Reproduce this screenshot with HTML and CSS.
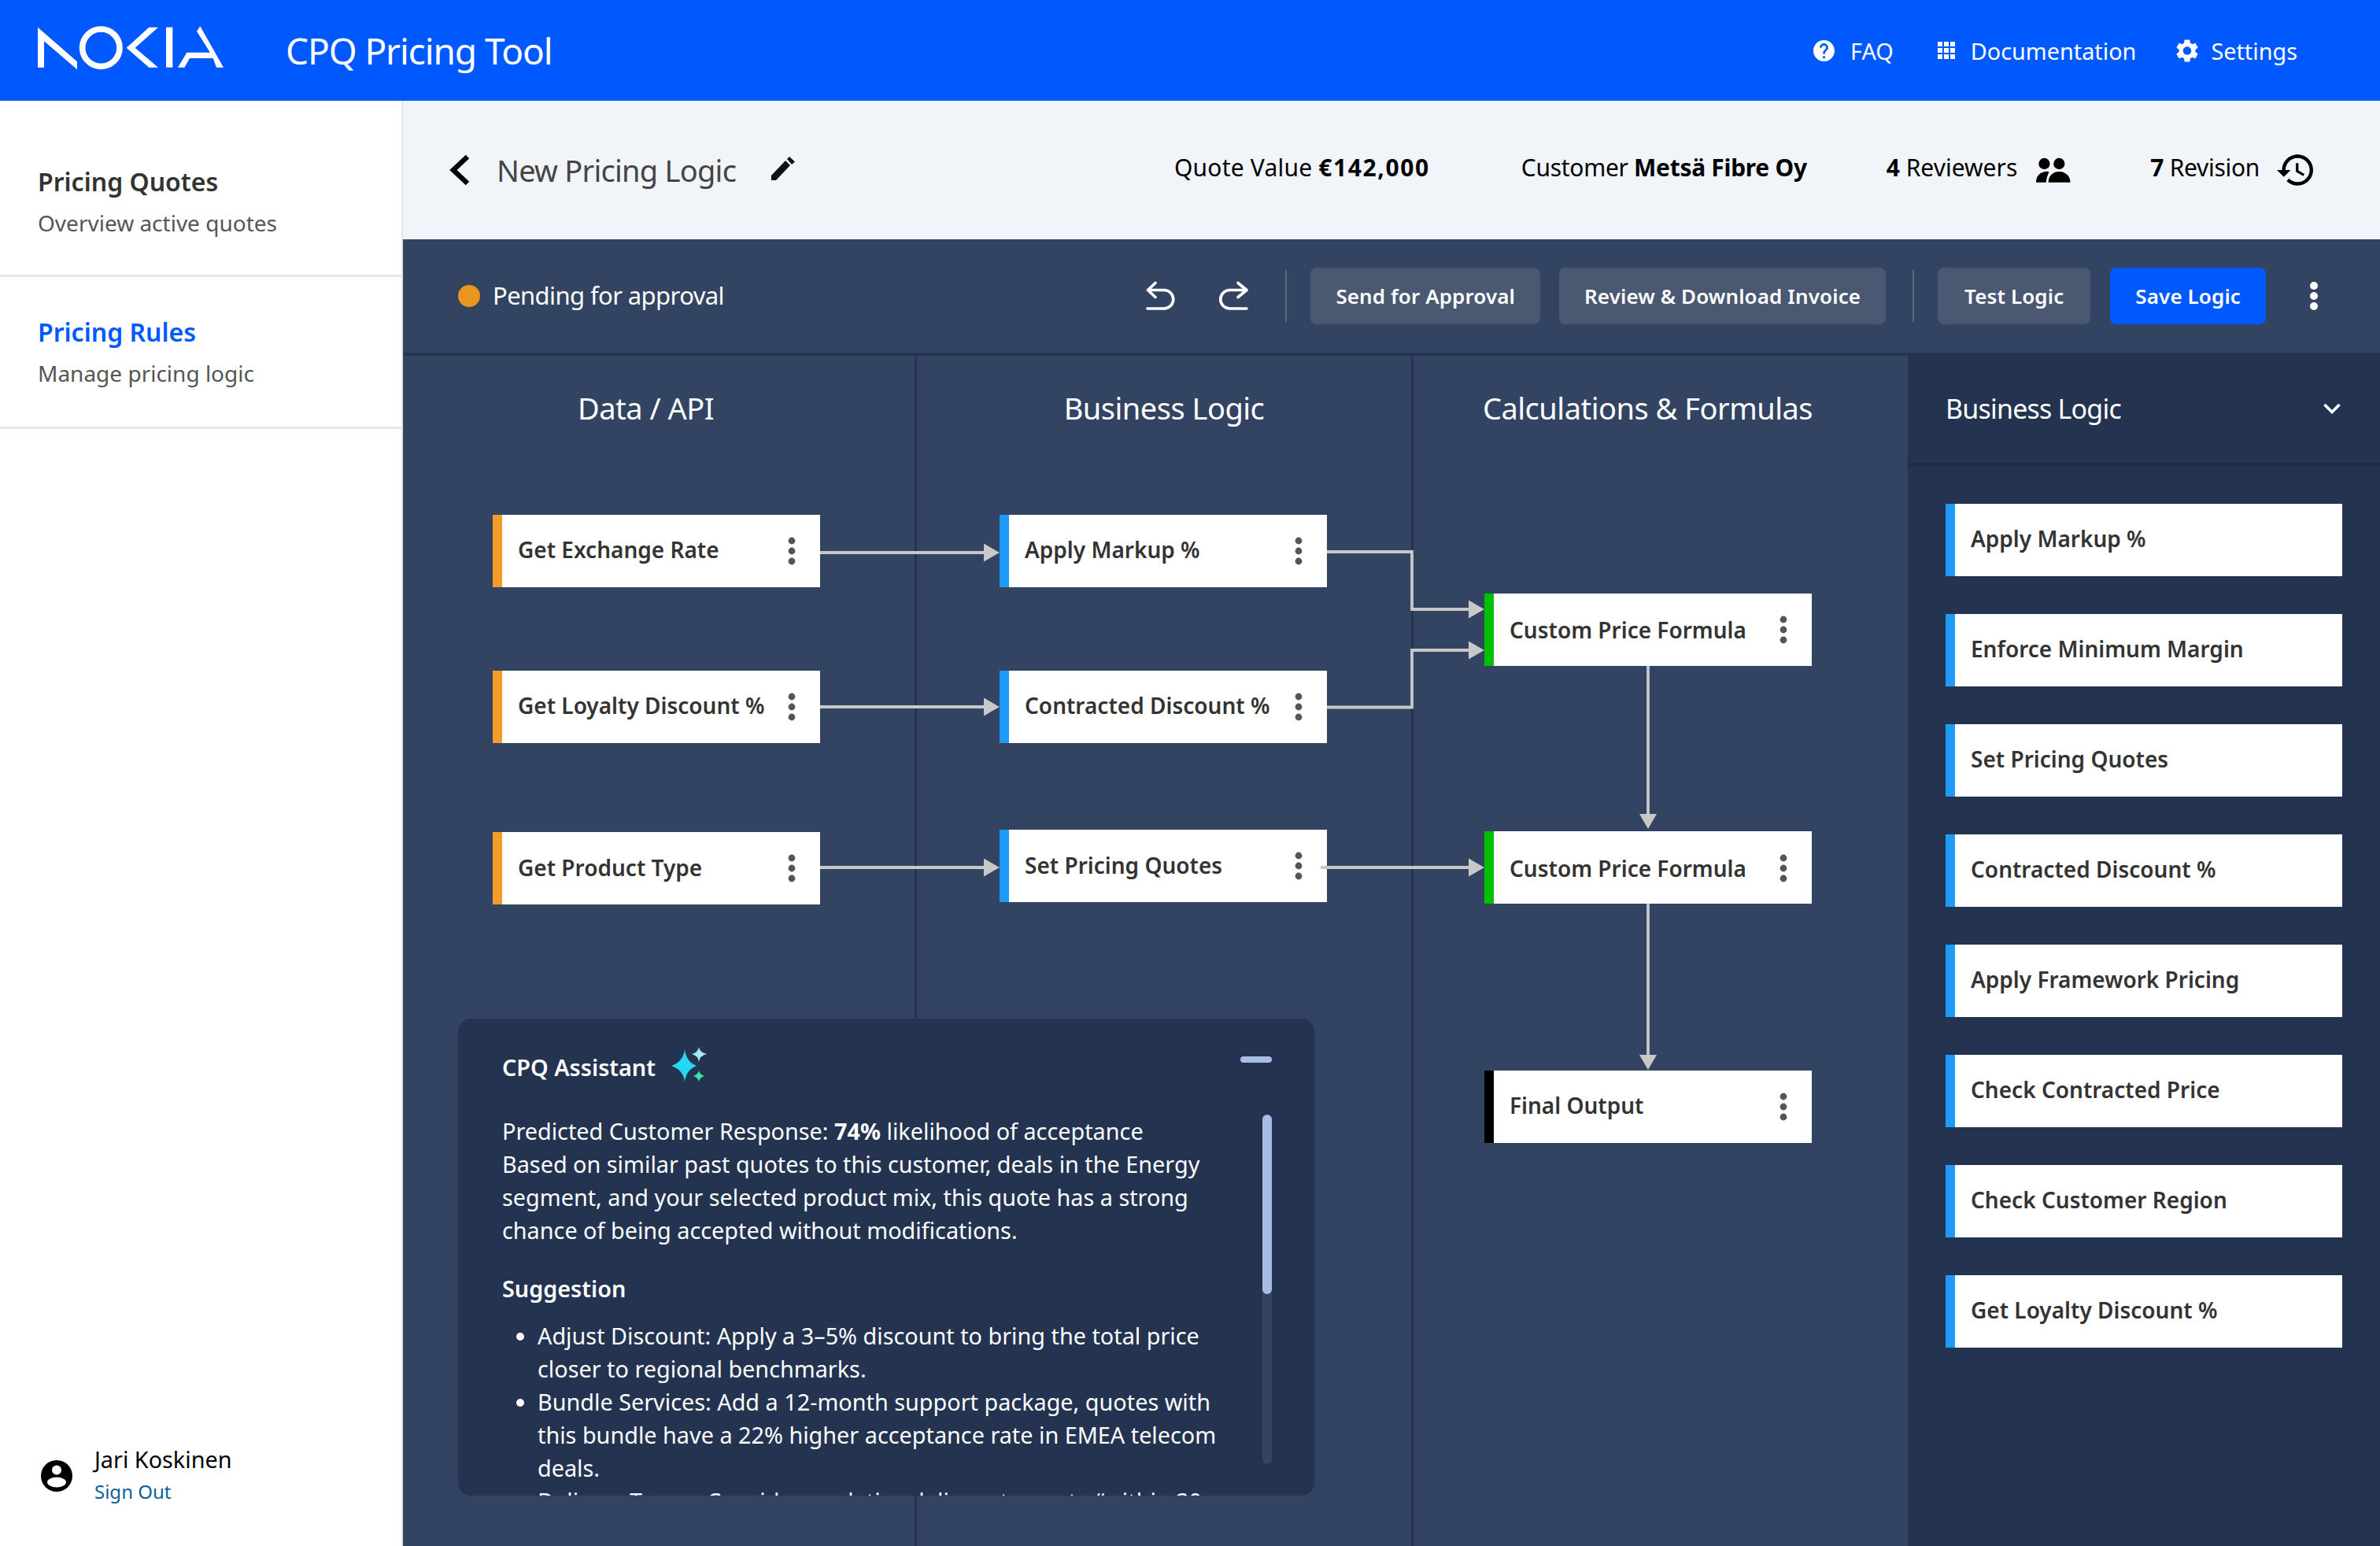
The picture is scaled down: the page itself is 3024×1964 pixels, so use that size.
FILE: index.html
```html
<!DOCTYPE html>
<html lang="en">
    <head>
        <meta charset="UTF-8" />
        <meta name="viewport" content="width=device-width, initial-scale=1.0" />
        <title>CPQ Pricing Tool</title>
        <link rel="stylesheet" href="styles.css">
    </head>
    <body>
        <div class="app">
            <header class="topbar">
                <svg class="logo" viewBox="0 0 840 270" aria-label="Nokia">
                    <polygon points="54,200 54,47 204,178 204,208 78,100 78,200" />
                    <circle cx="295" cy="125" r="71" fill="none" stroke="#fff" stroke-width="23" />
                    <polygon points="478,47 513,47 425,125 513,200 478,200 392,125" />
                    <rect x="543" y="47" width="25" height="153" />
                    <polygon points="660,62 673,43 762,200 735,200 722,165 633,165 613,200 588,200 622,143 711,143" />
                </svg>
                <h1 class="app-title">CPQ Pricing Tool</h1>
                <nav class="topnav">
                    <a class="topnav-item">
                        <svg class="icon-help" viewBox="2 2 20 20"><path d="M12 2C6.48 2 2 6.48 2 12s4.48 10 10 10 10-4.48 10-10S17.52 2 12 2zm1 17h-2v-2h2v2zm2.07-7.75l-.9.92C13.45 12.9 13 13.5 13 15h-2v-.5c0-1.1.45-2.1 1.17-2.83l1.24-1.26c.37-.36.59-.86.59-1.41 0-1.1-.9-2-2-2s-2 .9-2 2H8c0-2.21 1.79-4 4-4s4 1.79 4 4c0 .88-.36 1.68-.93 2.25z" /></svg>
                        FAQ
                    </a>
                    <a class="topnav-item">
                        <svg class="icon-grid" viewBox="0 0 22 22">
                            <rect x="0" y="0" width="6" height="6" /><rect x="8" y="0" width="6" height="6" /><rect x="16" y="0" width="6" height="6" />
                            <rect x="0" y="8" width="6" height="6" /><rect x="8" y="8" width="6" height="6" /><rect x="16" y="8" width="6" height="6" />
                            <rect x="0" y="16" width="6" height="6" /><rect x="8" y="16" width="6" height="6" /><rect x="16" y="16" width="6" height="6" />
                        </svg>
                        Documentation
                    </a>
                    <a class="topnav-item">
                        <svg class="icon-gear" viewBox="2.4 2 19.2 20"><path d="M19.14 12.94c.04-.3.06-.61.06-.94 0-.32-.02-.64-.07-.94l2.03-1.58c.18-.14.23-.41.12-.61l-1.92-3.32c-.12-.22-.37-.29-.59-.22l-2.39.96c-.5-.38-1.03-.7-1.62-.94l-.36-2.54c-.04-.24-.24-.41-.48-.41h-3.84c-.24 0-.43.17-.47.41l-.36 2.54c-.59.24-1.13.57-1.62.94l-2.39-.96c-.22-.08-.47 0-.59.22L2.74 8.87c-.12.21-.08.47.12.61l2.03 1.58c-.05.3-.09.63-.09.94s.02.64.07.94l-2.03 1.58c-.18.14-.23.41-.12.61l1.92 3.32c.12.22.37.29.59.22l2.39-.96c.5.38 1.03.7 1.62.94l.36 2.54c.05.24.24.41.48.41h3.84c.24 0 .44-.17.47-.41l.36-2.54c.59-.24 1.13-.56 1.62-.94l2.39.96c.22.08.47 0 .59-.22l1.92-3.32c.12-.22.07-.47-.12-.61l-2.01-1.58zM12 15.6c-1.98 0-3.6-1.62-3.6-3.6s1.62-3.6 3.6-3.6 3.6 1.62 3.6 3.6-1.62 3.6-3.6 3.6z" /></svg>
                        Settings
                    </a>
                </nav>
            </header>

            <aside class="sidebar">
                <a class="side-link">
                    <strong>Pricing Quotes</strong>
                    <span>Overview active quotes</span>
                </a>
                <a class="side-link active">
                    <strong>Pricing Rules</strong>
                    <span>Manage pricing logic</span>
                </a>
                <div class="user">
                    <svg class="user-icon" viewBox="0 0 40 40">
                        <circle cx="20" cy="20" r="20" fill="#000" />
                        <circle cx="20" cy="12.5" r="6" fill="#fff" />
                        <ellipse cx="20" cy="28" rx="12" ry="6.5" fill="#fff" />
                    </svg>
                    <div class="user-text">
                        <div class="user-name">Jari Koskinen</div>
                        <a class="sign-out">Sign Out</a>
                    </div>
                </div>
            </aside>

            <main class="workspace">
                <section class="quote-bar">
                    <svg class="icon-back" viewBox="0 0 28 40"><path d="M24 3 L6 20 L24 37" /></svg>
                    <h2 class="logic-name">New Pricing Logic</h2>
                    <svg class="icon-edit" viewBox="0 0 30 30"><path d="M0 30V24L18 5 24 11 6 30Z M20 3 23 0 30 6.5 26 10Z" /></svg>
                    <div class="quote-stats">
                        <div class="stat stat-value"><span>Quote Value <b class="price">€142,000</b></span></div>
                        <div class="stat"><span>Customer <b>Metsä Fibre Oy</b></span></div>
                        <div class="stat stat-reviewers"><span><b>4</b> Reviewers</span>
                            <svg class="icon-people" viewBox="16 15 45 33">
                                <circle cx="26.7" cy="23.3" r="7.3" />
                                <circle cx="46" cy="23.3" r="7.3" />
                                <path d="M32 47.7C32 38 39 33.5 46 33.5S60.5 38 60.5 47.7Z" />
                                <path d="M16 47.7C16 39 21 33.5 31 33.2 35 33.2 30 37 29 47.7Z" />
                            </svg>
                        </div>
                        <div class="stat"><span><b>7</b> Revision</span>
                            <svg class="icon-history" viewBox="1 3 21 18"><path d="M13 3c-4.97 0-9 4.03-9 9H1l3.89 3.89.07.14L9 12H6c0-3.87 3.13-7 7-7s7 3.13 7 7-3.13 7-7 7c-1.93 0-3.68-.79-4.94-2.06l-1.42 1.42C8.27 19.99 10.51 21 13 21c4.97 0 9-4.03 9-9s-4.03-9-9-9zm-1 5v5l4.28 2.54.72-1.21-3.5-2.08V8H12z" /></svg>
                        </div>
                    </div>
                </section>

                <section class="toolbar">
                    <span class="status-dot"></span>
                    <span class="status-text">Pending for approval</span>
                    <div class="toolbar-actions">
                        <svg class="icon-undo" viewBox="18 16 40 40"><path d="M30 19.5 L20.5 28.5 L30 37.5 M20.5 28.5 H41 a11.7 11.7 0 0 1 0 23.5 H20" /></svg>
                        <svg class="icon-undo" viewBox="108 16 40 40"><path d="M133 19.5 L144 28.5 L133 37.5 M144 28.5 H122.5 a11.7 11.7 0 0 0 0 23.5 H144" /></svg>
                        <span class="tool-divider first"></span>
                        <button class="btn">Send for Approval</button>
                        <button class="btn">Review &amp; Download Invoice</button>
                        <span class="tool-divider"></span>
                        <button class="btn btn-test">Test Logic</button>
                        <button class="btn btn-primary">Save Logic</button>
                        <svg class="icon-more" viewBox="0 0 12 36"><circle cx="6" cy="5" r="5" /><circle cx="6" cy="18" r="5" /><circle cx="6" cy="31" r="5" /></svg>
                    </div>
                </section>

                <section class="builder">
                    <div class="canvas">
                        <div class="column col-data"><h3>Data / API</h3></div>
                        <div class="column col-logic"><h3>Business Logic</h3></div>
                        <div class="column col-calc"><h3>Calculations &amp; Formulas</h3></div>

                        <div class="node data n1">Get Exchange Rate<svg class="node-more" viewBox="0 0 10 36"><circle cx="5" cy="5" r="4.4" /><circle cx="5" cy="18" r="4.4" /><circle cx="5" cy="31" r="4.4" /></svg></div>
                        <div class="node data n2">Get Loyalty Discount %<svg class="node-more" viewBox="0 0 10 36"><circle cx="5" cy="5" r="4.4" /><circle cx="5" cy="18" r="4.4" /><circle cx="5" cy="31" r="4.4" /></svg></div>
                        <div class="node data n3">Get Product Type<svg class="node-more" viewBox="0 0 10 36"><circle cx="5" cy="5" r="4.4" /><circle cx="5" cy="18" r="4.4" /><circle cx="5" cy="31" r="4.4" /></svg></div>
                        <div class="node logic n4">Apply Markup %<svg class="node-more" viewBox="0 0 10 36"><circle cx="5" cy="5" r="4.4" /><circle cx="5" cy="18" r="4.4" /><circle cx="5" cy="31" r="4.4" /></svg></div>
                        <div class="node logic n5">Contracted Discount %<svg class="node-more" viewBox="0 0 10 36"><circle cx="5" cy="5" r="4.4" /><circle cx="5" cy="18" r="4.4" /><circle cx="5" cy="31" r="4.4" /></svg></div>
                        <div class="node logic n6">Set Pricing Quotes<svg class="node-more" viewBox="0 0 10 36"><circle cx="5" cy="5" r="4.4" /><circle cx="5" cy="18" r="4.4" /><circle cx="5" cy="31" r="4.4" /></svg></div>
                        <div class="node calc n7">Custom Price Formula<svg class="node-more" viewBox="0 0 10 36"><circle cx="5" cy="5" r="4.4" /><circle cx="5" cy="18" r="4.4" /><circle cx="5" cy="31" r="4.4" /></svg></div>
                        <div class="node calc n8">Custom Price Formula<svg class="node-more" viewBox="0 0 10 36"><circle cx="5" cy="5" r="4.4" /><circle cx="5" cy="18" r="4.4" /><circle cx="5" cy="31" r="4.4" /></svg></div>
                        <div class="node output n9">Final Output<svg class="node-more" viewBox="0 0 10 36"><circle cx="5" cy="5" r="4.4" /><circle cx="5" cy="18" r="4.4" /><circle cx="5" cy="31" r="4.4" /></svg></div>

                        <!-- connectors, viewBox is in page coordinates -->
                        <svg class="wires" viewBox="512 452 1912 1512">
                            <path d="M1042 702H1252 M1042 898H1252 M1042 1102H1252" />
                            <path d="M1686 701H1794V774H1868 M1686 898.5H1794V826H1868 M1678 1102H1868" />
                            <path d="M2094 846V1036 M2094 1148V1342" />
                            <polygon points="1270,702 1250,690.5 1250,713.5" />
                            <polygon points="1270,898 1250,886.5 1250,909.5" />
                            <polygon points="1270,1102 1250,1090.5 1250,1113.5" />
                            <polygon points="1886,774 1866,762.5 1866,785.5" />
                            <polygon points="1886,826 1866,814.5 1866,837.5" />
                            <polygon points="1886,1102 1866,1090.5 1866,1113.5" />
                            <polygon points="2094,1053 2083,1034 2105,1034" />
                            <polygon points="2094,1359 2083,1340 2105,1340" />
                        </svg>

                        <div class="assistant">
                            <div class="assistant-head">
                                <span>CPQ Assistant</span>
                                <svg class="icon-spark" viewBox="0 0 46 44">
                                    <path fill="#27d6f5" d="M17 3Q19 19 32 24 19 29 17 44 15 29 0 24 15 19 17 3Z" />
                                    <path fill="#a5e9f6" d="M35 0Q36 7 45 9 36 11 35 19 34 11 26 9 34 7 35 0Z" />
                                    <path fill="#3ee3a4" d="M35 30Q36 35 42 37 36 39 35 44 34 39 28 37 34 35 35 30Z" />
                                </svg>
                            </div>
                            <span class="minimize"></span>
                            <div class="assistant-body">
                                <p>Predicted Customer Response: <b>74%</b> likelihood of acceptance<br>Based on similar past quotes to this customer, deals in the Energy segment, and your selected product mix, this quote has a strong chance of being accepted without modifications.</p>
                                <h4>Suggestion</h4>
                                <ul>
                                    <li>Adjust Discount: Apply a 3–5% discount to bring the total price closer to regional benchmarks.</li>
                                    <li>Bundle Services: Add a 12-month support package, quotes with this bundle have a 22% higher acceptance rate in EMEA telecom deals.</li>
                                    <li>Delivery Terms: Consider a relative delivery terms to “within 30 days”.</li>
                                </ul>
                            </div>
                            <div class="scroll-track"><div class="scroll-thumb"></div></div>
                        </div>
                    </div>

                    <aside class="palette">
                        <div class="palette-head">
                            <span>Business Logic</span>
                            <svg class="icon-chevron" viewBox="0 0 22 14"><path d="M1.5 2 L11 11.5 L20.5 2" /></svg>
                        </div>
                        <div class="palette-list">
                            <div class="block">Apply Markup %</div>
                            <div class="block">Enforce Minimum Margin</div>
                            <div class="block">Set Pricing Quotes</div>
                            <div class="block">Contracted Discount %</div>
                            <div class="block">Apply Framework Pricing</div>
                            <div class="block">Check Contracted Price</div>
                            <div class="block">Check Customer Region</div>
                            <div class="block">Get Loyalty Discount %</div>
                        </div>
                    </aside>
                </section>
            </main>
        </div>
    </body>
</html>
```
FILE: styles.css
```css
:root {
    --blue: #0059ff;
    --navy: #334362;
    --navy-dark: #233350;
    --line-dark: #1d2b45;
    --wire: #c8c8c8;
}
* {
    box-sizing: border-box;
}
body {
    margin: 0;
    font-family: "Noto Sans", sans-serif;
    color: #333;
}
h1, h2, h3, h4, p, ul {
    margin: 0;
    padding: 0;
    font-weight: 400;
}
.app {
    display: grid;
    grid-template-columns: 512px 1fr;
    grid-template-rows: 128px 1fr;
    height: 100vh;
    overflow: hidden;
}

/* top bar */
.topbar {
    grid-column: 1 / -1;
    display: flex;
    align-items: center;
    background-color: var(--blue);
    color: white;
    padding: 0 105px 0 30px;
}
.logo {
    width: 280px;
    height: 90px;
    fill: white;
}
.app-title {
    font-size: 46px;
    letter-spacing: -1.1px;
    margin-left: 53px;
}
.topnav {
    display: flex;
    gap: 50px;
    margin-left: auto;
}
.topnav-item {
    display: flex;
    align-items: center;
    font-size: 28.8px;
    gap: 20px;
}
.topnav-item + .topnav-item {
    margin-left: 6px;
}
.topnav-item:last-child {
    margin-left: 1px;
}
.topnav-item svg {
    fill: white;
}
.icon-help {
    width: 27px;
    height: 27px;
}
.icon-grid {
    width: 22px;
    height: 22px;
}
.icon-gear {
    width: 28px;
    height: 29px;
    margin-right: -4px;
}

/* sidebar */
.sidebar {
    display: flex;
    flex-direction: column;
    background-color: white;
    border-right: 2px solid #e3e6ea;
}
.side-link {
    display: flex;
    flex-direction: column;
    gap: 10px;
    padding: 81px 48px 46px;
    border-bottom: 3px solid #e6e6e6;
}
.side-link + .side-link {
    gap: 10px;
    padding: 48px 48px 48px;
}
.side-link strong {
    font-size: 32px;
    font-weight: 600;
    line-height: 44px;
}
.side-link span {
    font-size: 28px;
    line-height: 40px;
    color: #555;
}
.side-link.active strong {
    color: var(--blue);
}
.user {
    display: flex;
    align-items: center;
    gap: 28px;
    margin-top: auto;
    padding: 0 0 50px 52px;
}
.user-icon {
    width: 40px;
    height: 40px;
}
.user-text {
    padding-bottom: 1px;
}
.user-name {
    font-size: 28.8px;
    line-height: 38px;
    margin-bottom: 4px;
    color: #000;
}
.sign-out {
    font-size: 24px;
    line-height: 36px;
    color: #0b5f9b;
}

/* main */
.workspace {
    display: flex;
    flex-direction: column;
    min-width: 0;
    background-color: var(--navy);
}
.quote-bar {
    display: flex;
    align-items: center;
    height: 176px;
    padding: 0 85px 0 58px;
    background-color: #f1f5fa;
}
.icon-back {
    width: 28px;
    height: 40px;
    fill: none;
    stroke: #000;
    stroke-width: 6.5;
}
.logic-name {
    font-size: 38px;
    letter-spacing: -0.75px;
    color: #444;
    margin-left: 33px;
}
.icon-edit {
    width: 30px;
    height: 30px;
    margin-left: 45px;
    margin-top: -4px;
    fill: #111;
}
.quote-stats {
    display: flex;
    align-items: center;
    gap: 101px;
    margin-left: auto;
    font-size: 30px;
    letter-spacing: -0.3px;
    color: #000;
}
.stat {
    display: flex;
    align-items: center;
    gap: 24px;
}
.stat span {
    padding-bottom: 8px;
}
.stat b {
    font-weight: 700;
}
.stat b.price {
    letter-spacing: 1.6px;
}
.stat-value {
    letter-spacing: 0.2px;
    margin-right: 15px;
}
.stat-reviewers {
    letter-spacing: 0;
}
.icon-people {
    width: 44px;
    height: 34px;
}
.icon-history {
    width: 46px;
    height: 40px;
    margin-left: -2px;
}

.toolbar {
    display: flex;
    align-items: center;
    height: 144px;
    padding: 0 78px 0 70px;
    color: white;
}
.status-dot {
    width: 28px;
    height: 28px;
    border-radius: 50%;
    background-color: #ea961e;
}
.status-text {
    font-size: 31px;
    letter-spacing: -0.6px;
    margin-left: 16px;
    padding-bottom: 2px;
}
.toolbar-actions {
    display: flex;
    align-items: center;
    gap: 24px;
    margin-left: auto;
}
.icon-undo {
    width: 40px;
    height: 40px;
    fill: none;
    stroke: white;
    stroke-width: 3.6;
    stroke-linecap: round;
    stroke-linejoin: round;
}
.icon-undo + .icon-undo {
    margin-left: 28px;
}
.tool-divider {
    width: 2px;
    height: 66px;
    margin: 0 6px 0 10px;
    background-color: #5a6880;
}
.tool-divider.first {
    margin-left: 21px;
}
.btn {
    height: 72px;
    padding: 0 32px;
    border: 0;
    border-radius: 8px;
    background-color: #4a5872;
    color: white;
    font-family: inherit;
    font-size: 26px;
    letter-spacing: 0.1px;
    font-weight: 600;
}
.btn-test {
    padding: 0 34px;
}
.btn-primary {
    margin-left: 1px;
    background-color: var(--blue);
}
.icon-more {
    width: 12px;
    height: 36px;
    margin-left: 31px;
    fill: white;
}

/* builder */
.builder {
    flex: 1;
    display: flex;
    min-height: 0;
}
.canvas {
    position: relative;
    flex: 1;
    display: grid;
    grid-template-columns: 653px 631px 1fr;
    border-top: 4px solid var(--navy-dark);
}
.column {
    border-right: 3px solid var(--navy-dark);
    text-align: center;
}
.column h3 {
    font-size: 38px;
    letter-spacing: -0.5px;
    line-height: 54px;
    padding-top: 39px;
    color: white;
}
.col-data h3 {
    padding-right: 33px;
}
.col-calc {
    border-right: 0;
}
.col-calc h3 {
    padding-right: 33px;
}
.node {
    --lift: 5px;
    position: absolute;
    display: flex;
    align-items: center;
    justify-content: space-between;
    width: 416px;
    height: 92px;
    padding: 0 31px var(--lift) 20px;
    background-color: white;
    border-left: 12px solid #000;
    font-size: 28px;
    font-weight: 600;
    white-space: nowrap;
}
.node.data { border-left-color: #f39c2b; }
.node.logic { border-left-color: #1e9bf6; }
.node.calc { border-left-color: #00c000; --lift: 0px; }
.node.output { border-left-color: #000; }
.n1 { left: 114px; top: 202px; }
.n2 { left: 114px; top: 400px; }
.n3 { left: 114px; top: 605px; --lift: 3px; }
.n4 { left: 758px; top: 202px; }
.n5 { left: 758px; top: 400px; }
.n6 { left: 758px; top: 602px; --lift: 3px; }
.n7 { left: 1374px; top: 302px; }
.n8 { left: 1374px; top: 604px; padding-top: 2px; }
.n9 { left: 1374px; top: 908px; }
.node-more {
    flex: none;
    width: 10px;
    height: 36px;
    margin-top: var(--lift);
    fill: #555;
}
.wires {
    position: absolute;
    left: 0;
    top: 0;
    width: 1912px;
    height: 1512px;
    fill: var(--wire);
    pointer-events: none;
}
.wires path {
    fill: none;
    stroke: var(--wire);
    stroke-width: 3.8;
}

/* assistant */
.assistant {
    position: absolute;
    left: 70px;
    top: 842px;
    width: 1088px;
    height: 606px;
    padding: 0 120px 0 56px;
    border-radius: 16px;
    background-color: var(--navy-dark);
    color: white;
    overflow: hidden;
}
.assistant-head {
    display: flex;
    align-items: center;
    gap: 20px;
    height: 122px;
    font-size: 28.8px;
    font-weight: 600;
}
.icon-spark {
    width: 46px;
    height: 44px;
    margin-top: -6px;
}
.minimize {
    position: absolute;
    right: 54px;
    top: 48px;
    width: 40px;
    height: 8px;
    border-radius: 4px;
    background-color: #a9bce6;
}
.assistant-body {
    font-size: 28.8px;
    line-height: 42px;
}
.assistant-body h4 {
    margin: 32px 0 18px;
    font-size: 28.8px;
    font-weight: 600;
}
.assistant-body ul {
    padding-left: 45px;
}
.assistant-body b {
    font-weight: 700;
}
.scroll-track {
    position: absolute;
    right: 54px;
    top: 122px;
    width: 12px;
    height: 444px;
    border-radius: 6px;
    background-color: var(--navy);
}
.scroll-thumb {
    height: 228px;
    border-radius: 6px;
    background-color: #a9bce6;
}

/* palette */
.palette {
    flex: none;
    width: 600px;
    background-color: var(--navy-dark);
}
.palette-head {
    display: flex;
    align-items: center;
    justify-content: space-between;
    height: 144px;
    padding: 2px 50px 0 48px;
    border-bottom: 4px solid var(--line-dark);
    color: white;
    font-size: 34px;
    letter-spacing: -0.8px;
}
.icon-chevron {
    width: 22px;
    height: 14px;
    fill: none;
    stroke: white;
    stroke-width: 3.6;
}
.palette-list {
    display: flex;
    flex-direction: column;
    gap: 48px;
    padding: 48px 48px 0;
}
.block {
    display: flex;
    align-items: center;
    height: 92px;
    padding: 0 0 4px 20px;
    background-color: white;
    border-left: 12px solid #1e9bf6;
    font-size: 28px;
    font-weight: 600;
}
```
